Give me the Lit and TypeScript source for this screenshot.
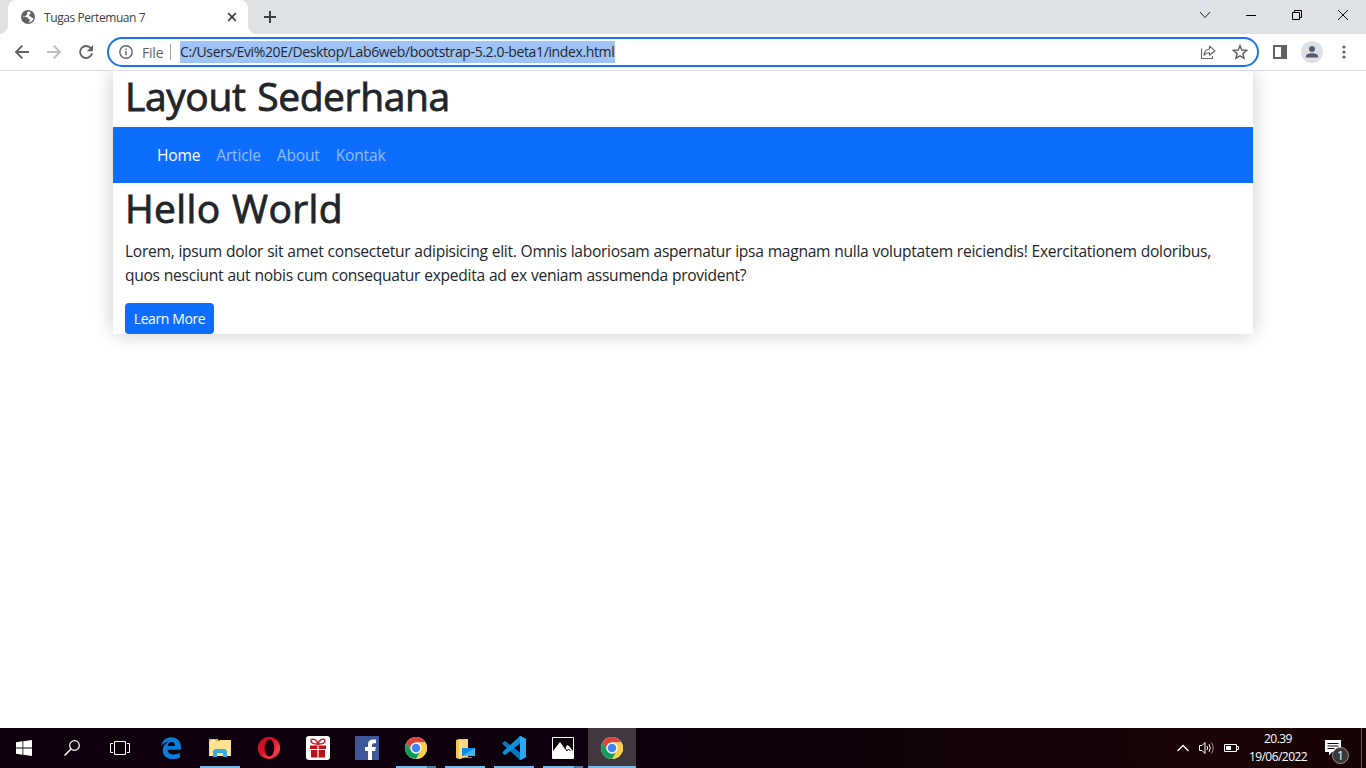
import { LitElement, html, svg, css } from "lit";
import { customElement } from "lit/decorators.js";

const chrome = html`<svg width="24" height="24" viewBox="0 0 24 24">
  <circle cx="12" cy="12" r="11" fill="#fff"/>
  <path d="M2.500 6.500A11 11 0 0 1 21.500 6.500H12A5.500 5.500 0 0 0 7.200 14.700Z" fill="#db4437"/>
  <path d="M21.500 6.500A11 11 0 0 1 12 23L16.800 14.700A5.500 5.500 0 0 0 12 6.500Z" fill="#ffcd40"/>
  <path d="M2.500 6.500L7.200 14.700A5.500 5.500 0 0 0 16.800 14.700L12 23A11 11 0 0 1 2.500 6.500Z" fill="#0f9d58"/>
  <circle cx="12" cy="12" r="5.500" fill="#fff"/><circle cx="12" cy="12" r="4.300" fill="#4285f4"/></svg>`;

const edge = html`<svg width="24" height="24" viewBox="0 0 24 24"><path fill="#0b7bd8" d="M2 10.600C2.700 5 6.700 1.200 12.200 1.200c6.300 0 9.800 4.400 9.800 9.900v2.700H8.500c.2 3.200 2.900 4.700 6.200 4.700 2.300 0 4.400-.6 6.200-1.700v4.700c-2 1.100-4.300 1.600-7.200 1.600-6 0-10-3.200-10-8.600 0-3.900 2.200-6.900 5.600-8.400C6.100 6.200 3.700 7.700 2 10.600zm6.700-.6h7.400c0-2.500-1.300-4-3.600-4-2.200 0-3.400 1.600-3.800 4z"/></svg>`;

const explorer = html`<svg width="24" height="24" viewBox="0 0 24 24"><path fill="#eab531" d="M1 3h9l1 2H1z"/><path fill="#ffe391" d="M1 5h10l1-1h11v16H1z"/><path fill="#fff" d="M3 4h4v1H3z"/><path fill="#35abe5" d="M5 21v-6l2-2h10l2 2v6h-4v-4H9v4z"/></svg>`;

const opera = html`<svg width="24" height="24" viewBox="0 0 24 24"><defs><linearGradient id="op" x1="0" y1="0" x2="1" y2="1"><stop offset="0" stop-color="#b80d20"/><stop offset=".45" stop-color="#e01328"/><stop offset=".75" stop-color="#ff3a48"/><stop offset="1" stop-color="#a60018"/></linearGradient></defs><path fill-rule="evenodd" fill="url(#op)" d="M12 1a11.200 11 0 1 0 .01 0zM12.500 3.500c3 0 4.700 3.700 4.700 8.500s-1.700 8.500-4.700 8.500-4.900-3.700-4.900-8.500 1.900-8.500 4.900-8.500z"/></svg>`;

const gift = html`<svg width="24" height="24" viewBox="0 0 24 24"><rect width="24" height="24" rx="3" fill="#fff"/><path fill="none" stroke="#d01820" stroke-width="1.500" d="M12 8C8 8.500 5 7 5 5s2-2.300 4-1.300S12 8 12 8s1-3.300 3-4.300 4-.7 4 1.300-3 3.500-7 3z"/><path fill="#b51319" d="M4 9.500h7.400V13H4zM12.600 9.500H20V13h-7.400zM5 14h6.400v7.500H5zM12.600 14H19v7.500h-6.400z"/></svg>`;

const facebook = html`<svg width="24" height="24" viewBox="0 0 24 24"><path fill="#3e5799" d="M0 0h24v24H0z"/><path fill="#fff" d="M13 24v-9h-3v-4h3V8.500C13 5.300 14.900 3.500 17.800 3.500H21v3.700h-2c-1.500 0-2 .8-2 2V11h3.800l-.6 4H17v9z"/></svg>`;

const folderPc = html`<svg width="24" height="24" viewBox="0 0 24 24"><path fill="#ecc35c" d="M3 4l3-1h9v18l-9 2-3-1z"/><path fill="#ffe08a" d="M6 3l3 2v17l-3 1z"/><path fill="#f7d67c" d="M9 4h6v17H9z"/><path fill="#0c8ce9" d="M9 12h13v8H9z"/><path fill="#3db5f5" d="M9 20l13-8v8z"/><path fill="#28a0e8" d="M12 21h7v1h-7z"/></svg>`;

const vscode = html`<svg width="24" height="24" viewBox="0 0 24 24"><path fill="#0878bd" d="M.6 6.800L3 5l15 11.500V24L.7 8.300c-.5-.5-.6-1-.1-1.500z"/><path fill="#0b91db" d="M.6 17.200L3 19 18 7.500V0L.7 15.700c-.5.500-.6 1-.1 1.500z"/><path fill="#29a9f2" d="M17 24c.6-.2 1-.6 1-1V1c0-.4-.4-.8-1-1h1.500l4.800 2.300c.5.200.7.600.7 1v17.400c0 .4-.2.800-.7 1L18.500 24z"/></svg>`;

const photo = html`<svg width="22" height="22" viewBox="0 0 22 22"><path d="M.5.500h21v21H.5z" fill="#090009" stroke="#fff"/><path fill="#fff" d="M1 14l7-9 5 7 2-4 2 1 4 5v7H1z"/><path stroke="#15000d" fill="none" d="M13 11l2 3 1.500-2 2 2"/></svg>`;

const apps = [
  { icon: edge, kind: "" },
  { icon: explorer, kind: "run" },
  { icon: opera, kind: "" },
  { icon: gift, kind: "" },
  { icon: facebook, kind: "" },
  { icon: chrome, kind: "run multi" },
  { icon: folderPc, kind: "run" },
  { icon: vscode, kind: "run" },
  { icon: photo, kind: "run multi" },
  { icon: chrome, kind: "run active" },
];

const backArrow = svg`<path fill="none" stroke="currentColor" stroke-width="1.900" d="M15 8H2.500M8.300 1.700L2 8l6.300 6.300"/>`;

@customElement("app-root")
class AppRoot extends LitElement {
  static styles = css`
    :host { display: flex; flex-direction: column; width: 1366px; height: 768px; overflow: hidden; background: #fff; color: #212529; font-family: "Open Sans", "Noto Sans", sans-serif; }
    * { box-sizing: border-box; }
    svg { display: block; flex: none; }
    span, a, time { white-space: nowrap; }
    .strip { height: 34px; flex: none; background: #dee1e6; display: flex; padding-left: 8px; }
    .tab { width: 240px; height: 34px; background: #fff; border-radius: 8px 8px 0 0; display: flex; align-items: center; padding: 0 10px 0 12px; position: relative; }
    .tab::before, .tab::after { content: ""; position: absolute; bottom: 0; width: 8px; height: 8px; }
    .tab::before { left: -8px; background: radial-gradient(circle at 0 0, transparent 7.500px, #fff 8px); }
    .tab::after { right: -8px; background: radial-gradient(circle at 100% 0, transparent 7.500px, #fff 8px); }
    .title { font-size: 12px; color: #3c4043; margin-left: 8px; flex: 1; letter-spacing: -0.420px; }
    .plus { margin: 10px 0 0 15px; }
    .win { margin-left: auto; display: flex; }
    .win div { width: 46px; height: 29px; display: grid; place-items: center; }
    .bar { height: 37px; flex: none; border-bottom: 1px solid #dadce0; display: flex; align-items: center; color: #5f6368; padding-left: 14px; position: relative; z-index: 1; background: #fff; }
    .off { color: #babcbe; margin-left: 16px; }
    .reload { margin-left: 16px; }
    .omni { width: 1152px; height: 30px; border: 2px solid #1a73e8; border-radius: 15px; margin-left: 13px; display: flex; align-items: center; padding: 0 9px 0 10px; font-size: 14px; }
    .file { margin-left: 9px; letter-spacing: -0.200px; width: 28px; }
    .sep { width: 1px; height: 16px; background: #9aa0a6; margin-right: 9px; }
    .url { background: #9dc3f7; color: #25282c; height: 22px; line-height: 22px; width: 435px; letter-spacing: -0.370px; }
    .share { margin-left: auto; margin-right: 16px; }
    .side { margin-left: 14px; }
    .avatar { margin-left: 14px; }
    .dots { margin-left: 19px; }
    .page { flex: 1; min-height: 0; }
    .container { width: 1140px; margin: 0 auto; box-shadow: 0 0 20px rgba(0,0,0,.2); height: 263px; }
    h1 { margin: 0 0 8px; padding: 0 12px; font-weight: 400; -webkit-text-stroke: 0.800px #212529; font-size: 39px; line-height: 50px; height: 48px; white-space: nowrap; }
    .h-a { letter-spacing: -0.400px; word-spacing: 2px; }
    .h-b { letter-spacing: 0.350px; word-spacing: 1px; }
    nav { height: 56px; background: #0d6efd; display: flex; align-items: center; gap: 16px; padding: 0 0 0 44px; font-size: 15.600px; color: rgba(255,255,255,.55); letter-spacing: -0.200px; }
    .on { color: #fff; }
    p { margin: 0 0 16px; padding: 0 12px; font-size: 15.600px; line-height: 24px; }
    p span { display: block; letter-spacing: -0.290px; word-spacing: 0.300px; }
    .btn { display: block; margin-left: 12px; width: 89px; height: 31px; background: #0d6efd; color: #fff; border: 0; border-radius: 4px; padding: 1px 0 0; font: 14px/30px "Open Sans", sans-serif; letter-spacing: -0.400px; white-space: nowrap; }
    .task { height: 40px; flex: none; background: linear-gradient(90deg, #10000e, #0d000c 50%, #140308 75%, #1c0506 90%, #160304); display: flex; color: #fff; }
    .cell { width: 48px; height: 40px; display: grid; place-items: center; position: relative; }
    .apps { display: flex; gap: 1px; margin-left: 3px; }
    .run::after { content: ""; position: absolute; left: 4px; width: 40px; bottom: 0; height: 2px; background: #76b9ed; }
    .multi::after { background: linear-gradient(90deg, #76b9ed 31px, #2b4257 31px, #507da1 32px); }
    .active { background: #40383e; }
    .active::after { left: 0; width: 48px; }
    .tray { margin-left: auto; display: flex; align-items: center; width: 190px; }
    .snd { margin-left: 9px; }
    .bat { margin-left: 9px; }
    .clock { width: 60px; margin-left: 9px; text-align: center; font-size: 12px; line-height: 18px; display: flex; flex-direction: column; align-items: center; padding-bottom: 1px; }
    .clock span { letter-spacing: -0.550px; }
    .note { margin-left: 17px; position: relative; width: 26px; height: 40px; }
    .note svg { margin-top: 12px; }
    .badge { position: absolute; left: 7px; top: 19px; width: 17px; height: 17px; border-radius: 50%; background: #3c3638; border: 1px solid #989496; font-size: 12px; line-height: 15px; text-align: center; }
    .edge { width: 1px; height: 40px; background: #655a5b; margin-left: auto; margin-right: 4px; }
  `;

  render() {
    return html`
      <div class="strip">
        <div class="tab">
          <svg width="16" height="16" viewBox="0 0 16 16"><circle cx="8" cy="8" r="7" fill="#5f6368"/><path fill="#fff" d="M8.500 2.200C7 3 6.800 4 7.200 4.600c.5.800-.2 1.600-1.200 1.700.1 1.100-1 1.500-2.800 1.300l-.8.500c.3 0 4.100.2 4.900.4 1 .3.700 1.600 2 1.800 1.100.2.800 1.200.3 1.600-.8.700-.8 1.500-1.700 1.900 3-.1 5.200-2 5.700-5-.9.300-2.200.3-2.300-.7 0-.7-.9-.6-1.700-.9-1-.5-.7-1.800.3-2.100.9-.3 1.100-.7.600-1.700z"/></svg>
          <span class="title">Tugas Pertemuan 7</span>
          <svg width="12" height="12" viewBox="0 0 12 12"><path d="M2.200 2.200l7.600 7.600M9.800 2.200L2.200 9.800" stroke="#3c4043" stroke-width="1.700"/></svg>
        </div>
        <svg class="plus" width="14" height="14" viewBox="0 0 14 14"><path d="M7 1v12M1 7h12" stroke="#3c4043" stroke-width="2"/></svg>
        <div class="win">
          <div><svg width="12" height="12" viewBox="0 0 12 12"><path d="M1 3l5 5.500L11 3" fill="none" stroke="#222"/></svg></div>
          <div><svg width="10" height="10" viewBox="0 0 10 10"><path d="M0 5.500h10" stroke="#000"/></svg></div>
          <div><svg width="10" height="10" viewBox="0 0 10 10"><path d="M.5 2.500h7v7h-7zM2.500 2V.5h7v7H8" fill="none" stroke="#000"/></svg></div>
          <div><svg width="12" height="12" viewBox="0 0 12 12"><path d="M1 1l10 10M11 1L1 11" stroke="#111"/></svg></div>
        </div>
      </div>
      <div class="bar">
        <svg width="16" height="16" viewBox="0 0 16 16">${backArrow}</svg>
        <svg class="off" width="16" height="16" viewBox="0 0 16 16"><g transform="matrix(-1 0 0 1 16 0)">${backArrow}</g></svg>
        <svg class="reload" width="16" height="16" viewBox="0 0 16 16"><path d="M13.200 4.800A6 6 0 1 0 14 9.200" fill="none" stroke="currentColor" stroke-width="1.900"/><path d="M15 1v6.300H8.800z" fill="currentColor"/></svg>
        <div class="omni">
          <svg width="14" height="14" viewBox="0 0 14 14"><circle cx="7" cy="7" r="6.200" fill="none" stroke="currentColor" stroke-width="1.400"/><path d="M6.250 6h1.500v4.300h-1.500zM6.250 3.500h1.500V5h-1.500z" fill="currentColor"/></svg>
          <span class="file">File</span><i class="sep"></i>
          <span class="url">C:/Users/Evi%20E/Desktop/Lab6web/bootstrap-5.2.0-beta1/index.html</span>
          <svg class="share" width="16" height="16" viewBox="0 0 16 16"><path d="M1.500 4.500v10h11v-2.500" fill="none" stroke="currentColor" stroke-width="1.100"/><path d="M9.500 5V2.200L15 6.800l-5.500 4.400V8.700C7 8.600 5.200 9.400 4 11.400 4.300 7.700 6.200 5.400 9.500 5z" fill="none" stroke="currentColor" stroke-width="1.100" stroke-linejoin="round"/></svg>
          <svg width="16" height="16" viewBox="0 0 16 16"><path d="M8 1.800l1.800 4.300 4.700.4-3.600 3.100 1.100 4.600L8 11.800l-4 2.400 1.100-4.600L1.500 6.500l4.700-.4z" fill="none" stroke="currentColor" stroke-width="1.500"/></svg>
        </div>
        <svg class="side" width="14" height="14" viewBox="0 0 14 14"><path fill-rule="evenodd" fill="currentColor" d="M0 0h14v14H0zM2 2v10h6V2z"/></svg>
        <svg class="avatar" width="22" height="22" viewBox="0 0 22 22"><circle cx="11" cy="11" r="11" fill="#dee1e6"/><circle cx="11" cy="8" r="3" fill="#545d70"/><path d="M5 16.500v-1.300c0-2.200 3.500-3 6-3s6 .8 6 3v1.300z" fill="#545d70"/></svg>
        <svg class="dots" width="4" height="14" viewBox="0 0 4 14"><circle cx="2" cy="2" r="1.600" fill="currentColor"/><circle cx="2" cy="7" r="1.600" fill="currentColor"/><circle cx="2" cy="12" r="1.600" fill="currentColor"/></svg>
      </div>
      <div class="page">
        <div class="container">
          <h1 class="h-a">Layout Sederhana</h1>
          <nav><a class="on">Home</a><a>Article</a><a>About</a><a>Kontak</a></nav>
          <h1 class="h-b">Hello World</h1>
          <p><span>Lorem, ipsum dolor sit amet consectetur adipisicing elit. Omnis laboriosam aspernatur ipsa magnam nulla voluptatem reiciendis! Exercitationem doloribus,</span><span>quos nesciunt aut nobis cum consequatur expedita ad ex veniam assumenda provident?</span></p>
          <button class="btn">Learn More</button>
        </div>
      </div>
      <div class="task">
        <div class="cell"><svg width="16" height="16" viewBox="0 0 16 16"><path fill="#fff" d="M0 2.200L6.500 1.300V7.500H0zM7.300 1.200L16 0v7.500H7.300zM0 8.500h6.500v6.200L0 13.800zM7.300 8.500H16V16l-8.700-1.200z"/></svg></div>
        <div class="cell"><svg width="16" height="16" viewBox="0 0 16 16"><circle cx="10.500" cy="5.500" r="4.800" fill="none" stroke="#fff" stroke-width="1.200"/><path d="M7 9L.5 15.500" stroke="#fff" stroke-width="1.500"/></svg></div>
        <div class="cell"><svg width="20" height="14" viewBox="0 0 20 14"><path d="M4.500.5h11v13h-11zM3 2.500H.5v9H3M17 2.500h2.500v9H17" fill="none" stroke="#fff"/></svg></div>
        <div class="apps">${apps.map((a) => html`<div class="cell ${a.kind}">${a.icon}</div>`)}</div>
        <div class="tray">
          <svg width="14" height="12" viewBox="0 0 14 12"><path d="M1.500 9L7 3.500 12.500 9" fill="none" stroke="#fff" stroke-width="1.300"/></svg>
          <svg class="snd" width="16" height="14" viewBox="0 0 16 14"><path d="M.5 4.500H3l3-3v11l-3-3H.5zM8 5q1.300 2 0 4M10 3.200q2.600 3.800 0 7.600" fill="none" stroke="#fff"/><path d="M12.300 1.500q4 5.500 0 11" fill="none" stroke="#999"/></svg>
          <svg class="bat" width="15" height="10" viewBox="0 0 15 10"><path d="M.5 1.500h12v7H.5zM13 3.500h1.500v3H13" fill="none" stroke="#fff"/><path d="M2 3h5v4H2z" fill="#fff"/></svg>
          <div class="clock"><span>20.39</span><span>19/06/2022</span></div>
          <div class="note"><svg width="16" height="16" viewBox="0 0 16 16"><path fill="#fff" d="M0 0h16v12H7l-3 3.500V12H0z"/><path d="M2.500 3.500h11M2.500 6h11M2.500 8.500h7" stroke="#160304"/></svg><span class="badge">1</span></div>
          <i class="edge"></i>
        </div>
      </div>`;
  }
}
